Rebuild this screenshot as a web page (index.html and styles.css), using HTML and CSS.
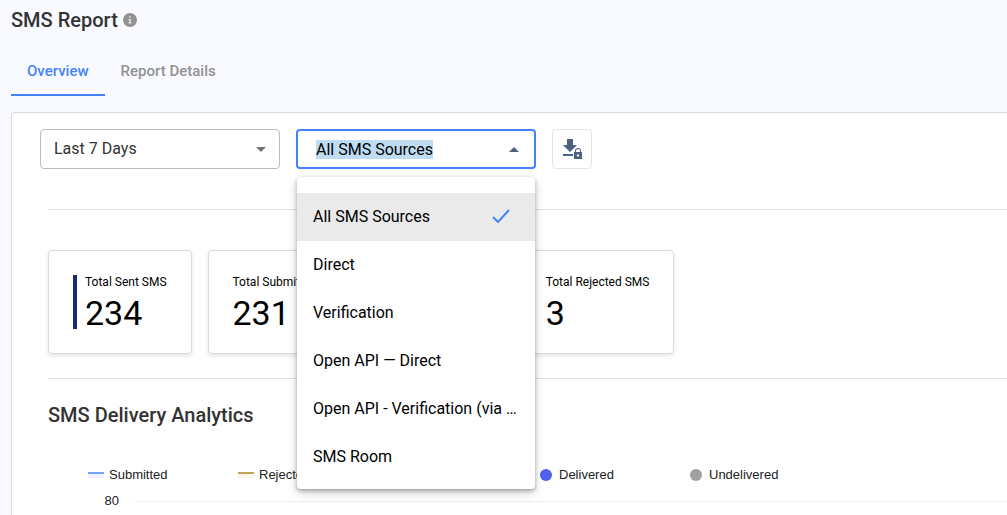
FILE: index.html
```html
<!DOCTYPE html>
<html lang="en">
  <head>
    <meta charset="UTF-8">
    <title>SMS Report</title>
    <link rel="stylesheet" href="styles.css">
  </head>
  <body>
    <header class="page-header">
      <h1>SMS Report</h1>
      <svg class="info" viewBox="0 0 14 14" role="img" aria-label="Info">
        <circle cx="7" cy="7" r="7" fill="#929292"/>
        <path d="M6.200 3.200h1.600v1.600H6.200zM5.500 6h2.300v3.600h.7v1h-3v-1h.7V7h-.7z" fill="#e4e5e9"/>
      </svg>
    </header>

    <nav class="tabs">
      <a class="tab active" href="#overview">Overview</a>
      <a class="tab" href="#details">Report Details</a>
    </nav>

    <main class="panel">
      <div class="filters">
        <div class="field">
          <select class="control" aria-label="Period">
            <option>Last 7 Days</option>
            <option>Last 30 Days</option>
          </select>
          <svg class="arrow" viewBox="0 0 10 5"><path d="M0 0h10L5 5z"/></svg>
        </div>

        <div class="field open">
          <input class="control" id="source" type="text" value="All SMS Sources" role="combobox"
                 aria-label="SMS source" aria-expanded="true" aria-controls="source-menu" autofocus>
          <svg class="arrow" viewBox="0 0 10 5"><path d="M0 5h10L5 0z"/></svg>
          <div class="menu" id="source-menu" role="listbox">
            <button class="option selected" role="option" aria-selected="true">
              <span>All SMS Sources</span>
              <svg class="check" viewBox="0 0 18 14"><path d="M1 8l5 5L17 1" fill="none" stroke="#4582fa" stroke-width="2"/></svg>
            </button>
            <button class="option" role="option"><span>Direct</span></button>
            <button class="option" role="option"><span>Verification</span></button>
            <button class="option" role="option"><span>Open API — Direct</span></button>
            <button class="option" role="option"><span>Open API - Verification (via …</span></button>
            <button class="option" role="option"><span>SMS Room</span></button>
          </div>
        </div>

        <button class="download" aria-label="Download report">
          <svg viewBox="0 0 20 20" fill="#4f6183">
            <path d="M5 0h6v6h4l-7 7-7-7h4z"/>
            <path d="M1 15h10v2H1z"/>
            <path d="M12 13h1v-1a3 3 0 0 1 6 0v1h1v7h-8zM14 13h4v-1a2 2 0 0 0-4 0zM16 15.300a1.200 1.200 0 1 0 .01 0z" fill-rule="evenodd"/>
          </svg>
        </button>
      </div>

      <div class="content">
        <section class="totals">
          <div class="card">
            <div class="stat marked">
              <span class="label">Total Sent SMS</span>
              <span class="value">234</span>
            </div>
          </div>
          <div class="card">
            <div class="stat">
              <span class="label">Total Submitted SMS</span>
              <span class="value">231</span>
            </div>
            <div class="stat">
              <span class="label">Total Delivered SMS</span>
              <span class="value">228</span>
            </div>
            <div class="stat">
              <span class="label">Total Rejected SMS</span>
              <span class="value">3</span>
            </div>
          </div>
        </section>

        <section class="analytics">
          <h2>SMS Delivery Analytics</h2>
          <ul class="legend">
            <li><i class="line submitted"></i>Submitted</li>
            <li><i class="line rejected"></i>Rejected</li>
            <li><i class="line sent"></i>Sent</li>
            <li><i class="dot delivered"></i>Delivered</li>
            <li><i class="dot undelivered"></i>Undelivered</li>
          </ul>
          <div class="axis-row">
            <span class="tick">80</span>
            <span class="gridline"></span>
          </div>
        </section>
      </div>
    </main>

    <script>
      document.querySelector("#source").select();
    </script>
  </body>
</html>
```
FILE: styles.css
```css
* {
  box-sizing: border-box;
}
body {
  display: flex;
  flex-direction: column;
  min-height: 100vh;
  margin: 0;
  padding-left: 11px;
  background: #f9faff;
  color: #000;
  font-family: Roboto, "Liberation Sans", sans-serif;
}
h1, h2 {
  margin: 0;
  color: #333;
  font-size: 20px;
  font-weight: 500;
  line-height: 24px;
}
button, input, select {
  font: inherit;
  cursor: pointer;
}
svg {
  display: block;
  flex: none;
}

.page-header {
  display: flex;
  align-items: center;
  gap: 5px;
  padding-top: 8px;
}
.info {
  width: 14px;
  height: 14px;
}

.tabs {
  display: flex;
  margin: 16px 0;
}
.tab {
  padding: 0 16px;
  border-bottom: 2px solid transparent;
  color: #929292;
  font-size: 15px;
  font-weight: 500;
  line-height: 46px;
  text-decoration: none;
}
.tab.active {
  border-color: #4582fa;
  color: #4582fa;
}

.panel {
  flex: 1;
  padding: 16px 0 0 28px;
  border: 1px solid #d9d9d9;
  border-width: 1px 0 0 1px;
  border-radius: 4px 0 0 0;
  background: #fff;
}
.filters {
  display: flex;
  gap: 16px;
}
.field {
  position: relative;
  width: 240px;
  color: #757575;
}
.control {
  width: 100%;
  height: 40px;
  padding: 0 13px 2px;
  border: 1px solid #bdbdbd;
  border-radius: 4px;
  outline: 0;
  background: #fff;
  color: #333;
  font-size: 16px;
  appearance: none;
}
.open {
  color: #4f6183;
}
.open .control {
  padding: 0 18px;
  border: 2px solid #4582fa;
  color: #000;
}
.control::selection {
  background: #bfdcf2;
  color: #000;
}
.arrow {
  position: absolute;
  top: 18px;
  right: 14px;
  width: 10px;
  height: 5px;
  fill: currentColor;
  pointer-events: none;
}
.open .arrow {
  right: 17px;
}

.menu {
  position: absolute;
  z-index: 1;
  top: 48px;
  left: 1px;
  right: 1px;
  padding: 16px 0 8px;
  border-radius: 4px;
  background: #fff;
  box-shadow: 0 2px 4px rgba(0, 0, 0, 0.3), 0 4px 12px rgba(0, 0, 0, 0.15);
}
.option {
  display: flex;
  justify-content: space-between;
  align-items: center;
  width: 100%;
  height: 48px;
  padding: 0 16px 2px;
  border: 0;
  background: none;
  color: #000;
  font-size: 16px;
  text-align: left;
  white-space: nowrap;
}
.option.selected {
  padding-right: 25px;
  background: #eaeaea;
}
.check {
  width: 18px;
  height: 14px;
}

.download {
  display: flex;
  justify-content: center;
  align-items: center;
  width: 40px;
  height: 40px;
  padding: 0;
  border: 1px solid #e5e5e5;
  border-radius: 4px;
  background: #fff;
}
.download svg {
  width: 20px;
  height: 20px;
}

.content {
  padding-left: 8px;
}
.totals {
  display: flex;
  gap: 16px;
  margin-top: 40px;
  padding: 40px 0 24px;
  border: 1px solid #e0e0e0;
  border-width: 1px 0;
}
.card {
  display: flex;
  gap: 47px;
  padding: 24px;
  border: 1px solid #d9dbdb;
  border-radius: 4px;
  box-shadow: 0 2px 4px rgba(0, 0, 0, 0.1);
}
.stat {
  display: flex;
  flex-direction: column;
  gap: 8px;
}
.stat.marked {
  padding-left: 8px;
  border-left: 4px solid #172b79;
}
.label {
  font-size: 12px;
  line-height: 14px;
}
.value {
  font-size: 34px;
  line-height: 32px;
}

.analytics {
  padding-top: 24px;
}
.legend {
  display: grid;
  grid-template-columns: repeat(5, 150px);
  margin: 40px 0 0;
  padding: 0 0 0 40px;
  list-style: none;
}
.legend, .tick {
  color: #222;
  font-family: "Liberation Sans", Arial, sans-serif;
  font-size: 13px;
  line-height: 16px;
}
.legend li {
  display: flex;
  align-items: center;
  gap: 5px;
}
.line {
  width: 16px;
  height: 6px;
  border-top: 2px solid;
}
.submitted {
  border-color: #75a2fb;
  background: #edf3ff;
}
.rejected {
  border-color: #c5a456;
  background: #faf6ec;
}
.sent {
  border-color: #172b79;
  background: #e8eaf2;
}
.dot {
  width: 12px;
  height: 12px;
  margin: 0 2px;
  border-radius: 50%;
}
.delivered {
  background: #4f61ee;
}
.undelivered {
  background: #a0a0a0;
}
.axis-row {
  display: flex;
  align-items: center;
  gap: 15px;
  margin-top: 10px;
}
.tick {
  width: 71px;
  text-align: right;
}
.gridline {
  flex: 1;
  height: 1px;
  background: #f0f0f0;
}
```
